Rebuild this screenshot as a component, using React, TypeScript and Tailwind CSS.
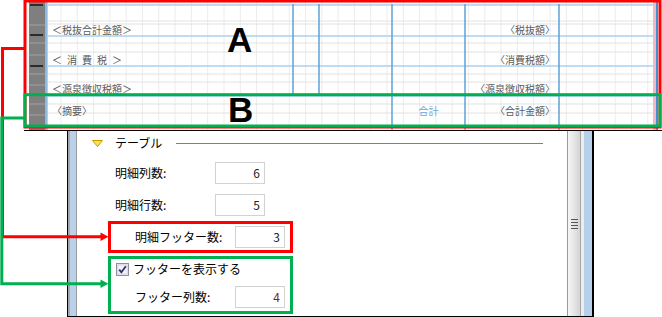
import React from 'react';

const rows = [
  { left: '＜税抜合計金額＞', mid: '', right: '〈税抜額〉', mt: 'mt-[24px]' },
  { left: '＜\u2002消\u2002費\u2002税\u2002＞', mid: '', right: '〈消費税額〉', mt: 'mt-[18px]' },
  { left: '＜源泉徴収税額＞', mid: '', right: '〈源泉徴収税額〉', mt: 'mt-[17px]' },
  { left: '〈摘要〉', mid: '合計', right: '〈合計金額〉', mt: 'mt-[10px]' },
];

const grayV = Array.from({ length: 37 }, (_, k) => 13 + 16.3 * k).filter((x) => x < 605);
const grayH = [21, 24, 43, 52, 74, 82, 104, 113];
const blueH = [5, 36, 66, 96];
const rulerLight = [25, 43, 55, 74, 85, 104, 115];
const rulerTicks = [5, 35, 66];

const GridLines = () => (
  <svg className="absolute inset-0" width={605} height={130}>
    {grayV.map((x) => <line key={'v' + x} x1={x} y1={0} x2={x} y2={130} stroke="#ececec" strokeWidth={1} />)}
    {grayH.map((y) => <line key={'h' + y} x1={0} y1={y} x2={605} y2={y} stroke="#e2e2e2" strokeWidth={1} />)}
    {blueH.map((y) => <line key={'b' + y} x1={0} y1={y} x2={605} y2={y} stroke="#a8d0ef" strokeWidth={1.5} />)}
    {[245, 271].map((x) => <line key={'c' + x} x1={x} y1={4} x2={x} y2={96} stroke="#5aa2d8" strokeWidth={1.5} />)}
    {[344, 417, 511].map((x) => <line key={'d' + x} x1={x} y1={4} x2={x} y2={130} stroke="#5aa2d8" strokeWidth={1.5} />)}
  </svg>
);

const Ruler = () => (
  <div className="relative w-[16px] h-full bg-[#7f7f7f]">
    <svg className="absolute inset-0" width={16} height={130}>
      {rulerLight.map((y) => <line key={'l' + y} x1={0} y1={y} x2={16} y2={y} stroke="#a2a2a2" strokeWidth={1} />)}
      {rulerTicks.map((y) => <line key={'t' + y} x1={1} y1={y} x2={14} y2={y} stroke="#111" strokeWidth={1.5} />)}
    </svg>
  </div>
);

const NumField = ({ value, color = 'text-[#222]' }: { value: string; color?: string }) => (
  <div className={`w-[50px] h-[22px] border border-[#d2d2d2] bg-white flex items-center justify-end pr-[4px] text-[12px] ${color}`}>
    {value}
  </div>
);

const Check = () => (
  <svg width={13} height={13} viewBox="0 0 13 13">
    <rect x={0.5} y={0.5} width={12} height={12} fill="#e8e8ee" stroke="#8e8f99" />
    <rect x={2} y={2} width={9} height={9} fill="#f4f4f8" stroke="#c5c6d2" strokeWidth={0.6} />
    <path d="M3.2 6.6 L5.4 9.2 L9.8 3.2" fill="none" stroke="#2a2f7a" strokeWidth={1.8} />
  </svg>
);

export default function App() {
  return (
    <div className="relative w-[662px] h-[317px] bg-white overflow-hidden font-['Noto_Sans_CJK_JP',sans-serif]">
      {/* designer screenshot */}
      <div className="ml-[24px] w-[638px] h-[131px] flex border-b border-black">
        <div className="w-[5px]" />
        <Ruler />
        <div className="w-[2px] bg-[#8cbbe2]" />
        <div className="w-[1px] bg-[#f2b8c4]" />
        <div className="relative w-[605px] h-full">
          <GridLines />
          <div className="relative flex flex-col text-[10px] leading-[12px] text-[#5a5a5a]">
            {rows.map((r, i) => (
              <div key={i} className={`grid grid-cols-[245px_26px_73px_73px_94px_94px] h-[12px] ${r.mt}`}>
                <span className="pl-[4px] whitespace-nowrap">{r.left}</span>
                <span />
                <span />
                <span className="text-center text-[#6aa9dc]">{r.mid}</span>
                <span className="pr-[4px] text-right whitespace-nowrap">{r.right}</span>
                <span />
              </div>
            ))}
          </div>
        </div>
        <div className="w-[3px] bg-[#f2b8c4]" />
        <div className="w-[2px] bg-[#3f8fd2]" />
        <div className="w-[4px]" />
      </div>

      {/* property panel */}
      <div className="ml-[67px] w-[527px] h-[186px] flex border-l border-r-2 border-b border-black">
        <div className="w-[2px] bg-[#a8a8a8]" />
        <div className="w-[6px] bg-[#b9d1ea]" />
        <div className="w-[1px] bg-[#9a9a9a]" />
        <div className="flex-1 flex flex-col text-[12px] text-black">
          <div className="h-[24px] flex items-center">
            <svg className="ml-[15px]" width={11} height={7} viewBox="0 0 11 7">
              <polygon points="0.5,0.5 10.5,0.5 5.5,6.5" fill="#ffe14d" stroke="#c79a00" strokeWidth={1} />
            </svg>
            <span className="ml-[12px]">テーブル</span>
            <div className="ml-[14px] w-[367px] h-[1px] bg-[#808080]" />
          </div>
          <div className="mt-[7px] h-[22px] flex items-center pl-[38px]">
            <span className="w-[100px]">明細列数:</span>
            <NumField value="6" />
          </div>
          <div className="mt-[10px] h-[22px] flex items-center pl-[38px]">
            <span className="w-[100px]">明細行数:</span>
            <NumField value="5" />
          </div>
          <div className="mt-[5px] ml-[31px] w-[185px] h-[32px] border-[3px] border-[#ff0000] flex items-center pl-[24px]">
            <span className="w-[100px]">明細フッター数:</span>
            <NumField value="3" />
          </div>
          <div className="mt-[3px] ml-[31px] w-[185px] h-[58px] border-[3px] border-[#00b050] flex flex-col">
            <div className="h-[20px] flex items-center pl-[5px] gap-[4px]">
              <Check />
              <span>フッターを表示する</span>
            </div>
            <div className="mt-[7px] h-[22px] flex items-center pl-[24px]">
              <span className="w-[100px]">フッター列数:</span>
              <NumField value="4" color="text-[#7a1f1f]" />
            </div>
          </div>
        </div>
        {/* scrollbar */}
        <div className="w-[1px] bg-[#9a9a9a]" />
        <div className="relative w-[12px] bg-gradient-to-r from-[#f6f6f6] to-[#d4d4d4] flex flex-col items-center justify-center gap-[2px]">
          <div className="w-[7px] h-[1px] bg-[#555]" />
          <div className="w-[7px] h-[1px] bg-[#555]" />
          <div className="w-[7px] h-[1px] bg-[#555]" />
          <div className="w-[7px] h-[1px] bg-[#555]" />
        </div>
        <div className="w-[1px] bg-[#a5a5a5]" />
        <div className="w-[3px] bg-[#ececec]" />
        <div className="w-[8px] bg-[#b7d0ea]" />
      </div>

      {/* annotations */}
      <svg className="absolute inset-0 pointer-events-none" width={662} height={317}>
        <rect x={25} y={1} width={635} height={126} fill="none" stroke="#ff0000" strokeWidth={3} />
        <polyline points="25,48.5 2.5,48.5 2.5,236.7 102,236.7" fill="none" stroke="#ff0000" strokeWidth={3} />
        <polygon points="100.5,232.5 108.5,236.7 100.5,241" fill="#ff0000" />
        <rect x={25} y={94.7} width={635} height={31.3} fill="none" stroke="#00b050" strokeWidth={3} />
        <polyline points="25,118 1.8,118 1.8,283.7 102,283.7" fill="none" stroke="#00b050" strokeWidth={3} />
        <polygon points="100.5,279.5 108.5,283.7 100.5,288" fill="#00b050" />
      </svg>
      <div className="absolute left-[227px] top-[22px] text-[35px] leading-none font-bold text-black font-['Liberation_Sans',sans-serif]">A</div>
      <div className="absolute left-[228px] top-[92px] text-[35px] leading-none font-bold text-black font-['Liberation_Sans',sans-serif]">B</div>
    </div>
  );
}
